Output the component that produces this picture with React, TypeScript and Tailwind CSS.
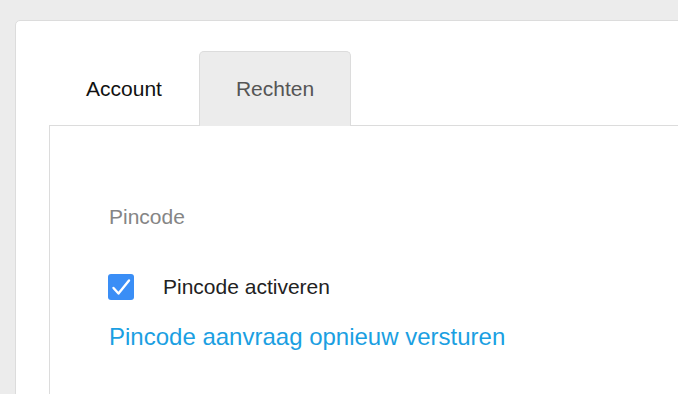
import React from 'react';

const font = { fontFamily: '"Liberation Sans", Arial, sans-serif' };

function CheckIcon() {
    return (
        <svg viewBox="0 0 26 26" className="-ml-px h-[26px] w-[26px] shrink-0" aria-hidden={true}>
            <rect x="0" y="0" width="26" height="26" rx="3" fill="#3a8ef6" />
            <path d="M5.5 14 L10.5 19.5 L21 6.5" fill="none" stroke="#fff" strokeWidth="2.4" strokeLinecap="round" strokeLinejoin="round" />
        </svg>
    );
}

export default function App() {
    return (
        <div className="h-[394px] w-[678px] overflow-hidden bg-[#ececec] pl-[15px] pt-[20px]" style={font}>
            <div className="w-[700px] h-[420px] rounded-tl-[5px] border border-[#dcdcdc] bg-white pl-[33px] pt-[30px]">
                <div className="flex">
                    <div className="flex h-[75px] w-[150px] items-center justify-center text-[21px] text-[#111]">
                        Account
                    </div>
                    <div className="flex h-[75px] w-[152px] items-center justify-center rounded-t-[5px] border border-b-0 border-[#dcdcdc] bg-[#ececec] text-[21px] text-[#555]">
                        Rechten
                    </div>
                </div>
                <div className="-mt-px h-[300px] border-l border-t border-[#dcdcdc] pl-[59px] pt-[78px]">
                    <p className="text-[21px] leading-[25px] text-[#858585]">Pincode</p>
                    <label className="mt-[45px] flex h-[26px] items-center gap-[29px]">
                        <CheckIcon />
                        <span className="text-[21px] text-[#222]">Pincode activeren</span>
                    </label>
                    <a className="mt-[23px] block text-[24px] leading-[28px] text-[#1b9fe2]">
                        Pincode aanvraag opnieuw versturen
                    </a>
                </div>
            </div>
        </div>
    );
}
